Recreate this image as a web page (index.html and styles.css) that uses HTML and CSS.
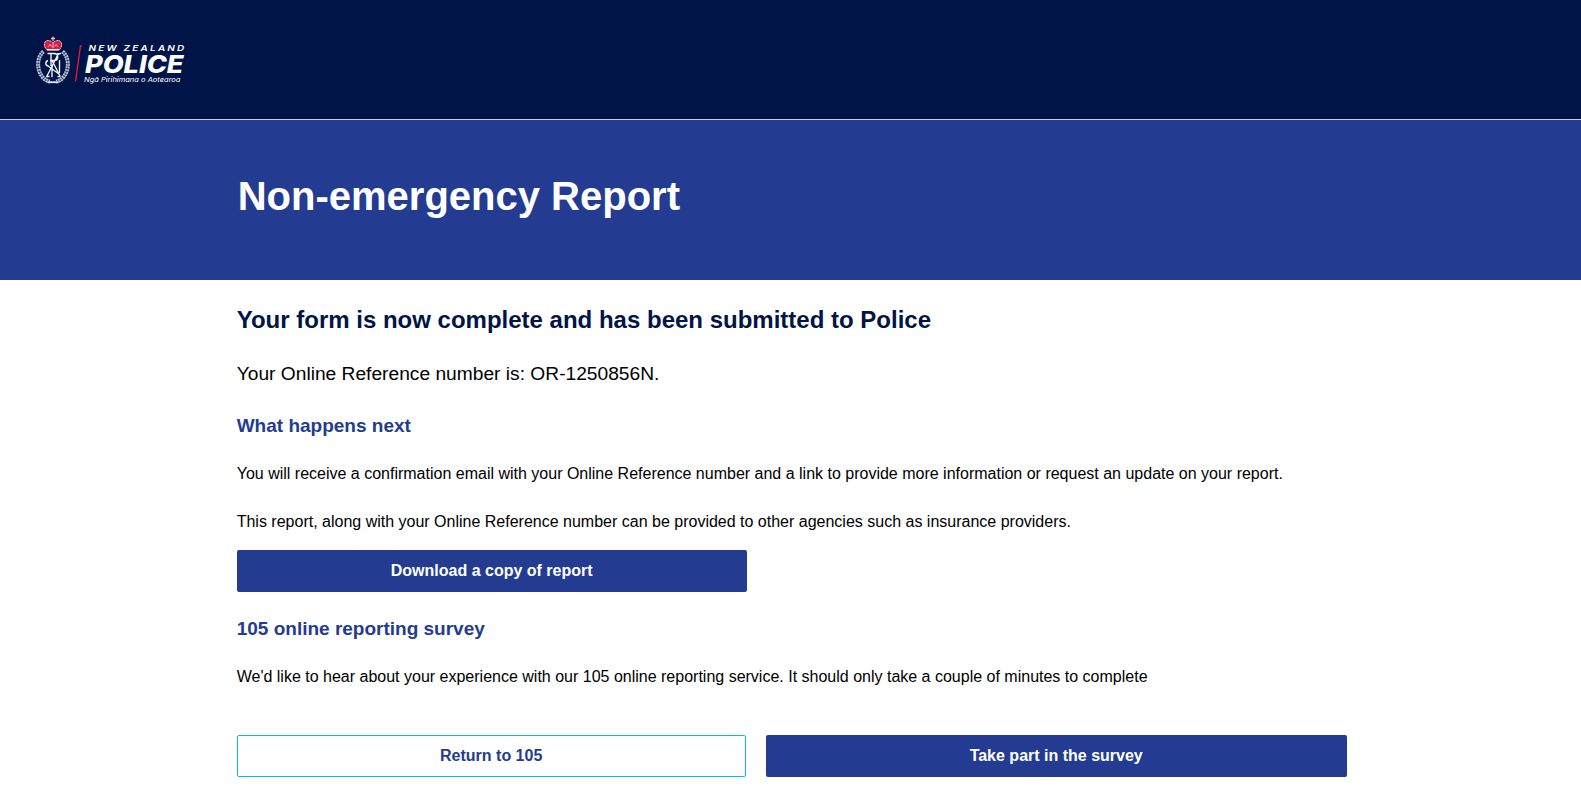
FILE: index.html
```html
<!DOCTYPE html>
<html lang="en">
<head>
<meta charset="utf-8">
<title>Non-emergency Report</title>
<link rel="stylesheet" href="styles.css">
</head>
<body>
<header class="site-header">
  <svg class="logo" width="152" height="50" viewBox="35 36 152 50" role="img" aria-label="New Zealand Police">
    <g fill="none" stroke="#b4bed4" stroke-width="4" stroke-dasharray="2.200 .5">
      <path d="M43.500 51.500C37 57 36.800 68 40.800 74.500C43 78.500 46 81 50 81.500"/>
      <path d="M62.500 51.500C69 57 69.200 68 65.200 74.500C63 78.500 60 81 56 81.500"/>
    </g>
    <g fill="none" stroke="#001447" stroke-width=".4">
      <path d="M43.500 51.500C37 57 36.800 68 40.800 74.500C43 78.500 46 81 50 81.500"/>
      <path d="M62.500 51.500C69 57 69.200 68 65.200 74.500C63 78.500 60 81 56 81.500"/>
    </g>
    <g fill="none" stroke="#f4f6fa" stroke-width="1.350">
      <path d="M47.500 53.500H54C59 53.500 59 60.500 54 60.500H50M51 53.500V66M52 60.500L60 76M58.500 53.500L47 76"/>
      <path d="M57 54L61 53.500M46 64.500L59 74M59.500 60V73M48 60.500C45 61.500 45 66 48.500 66M46 76.500H49.500M57.500 76.500H60.500M52 66V77"/>
    </g>
    <path d="M47.500 82.200H58.500" stroke="#d8deea" stroke-width="1.900"/>
    <path d="M46.500 49.500C43 46 44 40.500 48 40.500C50 40.500 52 41.500 53 43C54 41.500 56 40.500 58 40.500C62 40.500 63 46 59.500 49.500Z" fill="#d81e42" stroke="#f3dfe5" stroke-width="1" stroke-dasharray="1.200 .5"/>
    <path d="M53 36.500V41M51 38.500H55" stroke="#f0b8c5" stroke-width="1.300"/>
    <path d="M48.500 46.500L50 44.500L51.500 46.500M54.500 46.500L56 44.500L57.500 46.500M53 43V48" fill="none" stroke="#fff" stroke-width=".7"/>
    <path d="M47 49.800H59" stroke="#fff" stroke-width="1.500"/>
    <path d="M82 45.800H80.500L75.500 81.500" fill="none" stroke="#e51a3c" stroke-width="1.350"/>
    <text class="logo-country" x="88.500" y="51" textLength="98" lengthAdjust="spacingAndGlyphs">NEW ZEALAND</text>
    <text class="logo-name" x="85" y="73" textLength="98.500" lengthAdjust="spacingAndGlyphs">POLICE</text>
    <text class="logo-maori" x="84" y="81.500" textLength="96.500" lengthAdjust="spacingAndGlyphs">Ngā Pirihimana o Aotearoa</text>
  </svg>
</header>
<section class="hero">
  <h1 class="hero-title">Non-emergency Report</h1>
</section>
<main class="content">
  <h2 class="complete">Your form is now complete and has been submitted to Police</h2>
  <p class="reference">Your Online Reference number is: OR-1250856N.</p>
  <h3 class="subhead">What happens next</h3>
  <p class="text">You will receive a confirmation email with your Online Reference number and a link to provide more information or request an update on your report.</p>
  <p class="text">This report, along with your Online Reference number can be provided to other agencies such as insurance providers.</p>
  <button class="button download" type="button">Download a copy of report</button>
  <h3 class="subhead">105 online reporting survey</h3>
  <p class="text">We'd like to hear about your experience with our 105 online reporting service. It should only take a couple of minutes to complete</p>
  <div class="actions">
    <button class="button outline" type="button">Return to 105</button>
    <button class="button" type="button">Take part in the survey</button>
  </div>
</main>
</body>
</html>
```
FILE: styles.css
```css
* { box-sizing: border-box; }
body { margin: 0; height: 789px; overflow: hidden; background: #fff; color: #000; font-family: "Liberation Sans", Arial, sans-serif; }
h1, h2, h3, p { margin: 0; }
.site-header { height: 120px; padding: 36px 35px; background: #001447; border-bottom: 1px solid #c5cbd8; }
.logo { display: block; }
.logo text { fill: #fff; font-style: italic; }
.logo-country { font-family: Inter, sans-serif; font-size: 8px; font-weight: 600; letter-spacing: 1.8px; }
.logo-name { font-family: Inter, sans-serif; font-size: 24px; font-weight: 800; }
.logo-maori { font-family: Inter, sans-serif; font-size: 6.5px; font-weight: 400; }
.hero { height: 160px; padding: 52px 237.7px; background: #233c91; color: #fff; }
.hero-title { font-size: 40px; line-height: 48px; }
.content { padding: 24px 234px 0 236.7px; }
.complete { color: #001447; font-size: 24px; line-height: 32px; }
.reference { margin-top: 26px; font-size: 19.2px; line-height: 24px; }
.subhead { margin-top: 28px; color: #233c91; font-size: 19px; line-height: 24px; }
.text { margin-top: 24px; font-size: 16px; line-height: 24px; }
.button { height: 42px; padding: 0; border: 0; border-radius: 2px; background: #233c91; color: #fff; font: bold 16px/24px "Liberation Sans", Arial, sans-serif; }
.download { display: block; width: 510px; margin-top: 16px; }
.download + .subhead { margin-top: 25px; }
.actions { display: grid; grid-template-columns: 509px 581px; column-gap: 20px; margin-top: 46px; }
.outline { border: 1px solid #00bdea; background: #fff; color: #233c91; }
```
